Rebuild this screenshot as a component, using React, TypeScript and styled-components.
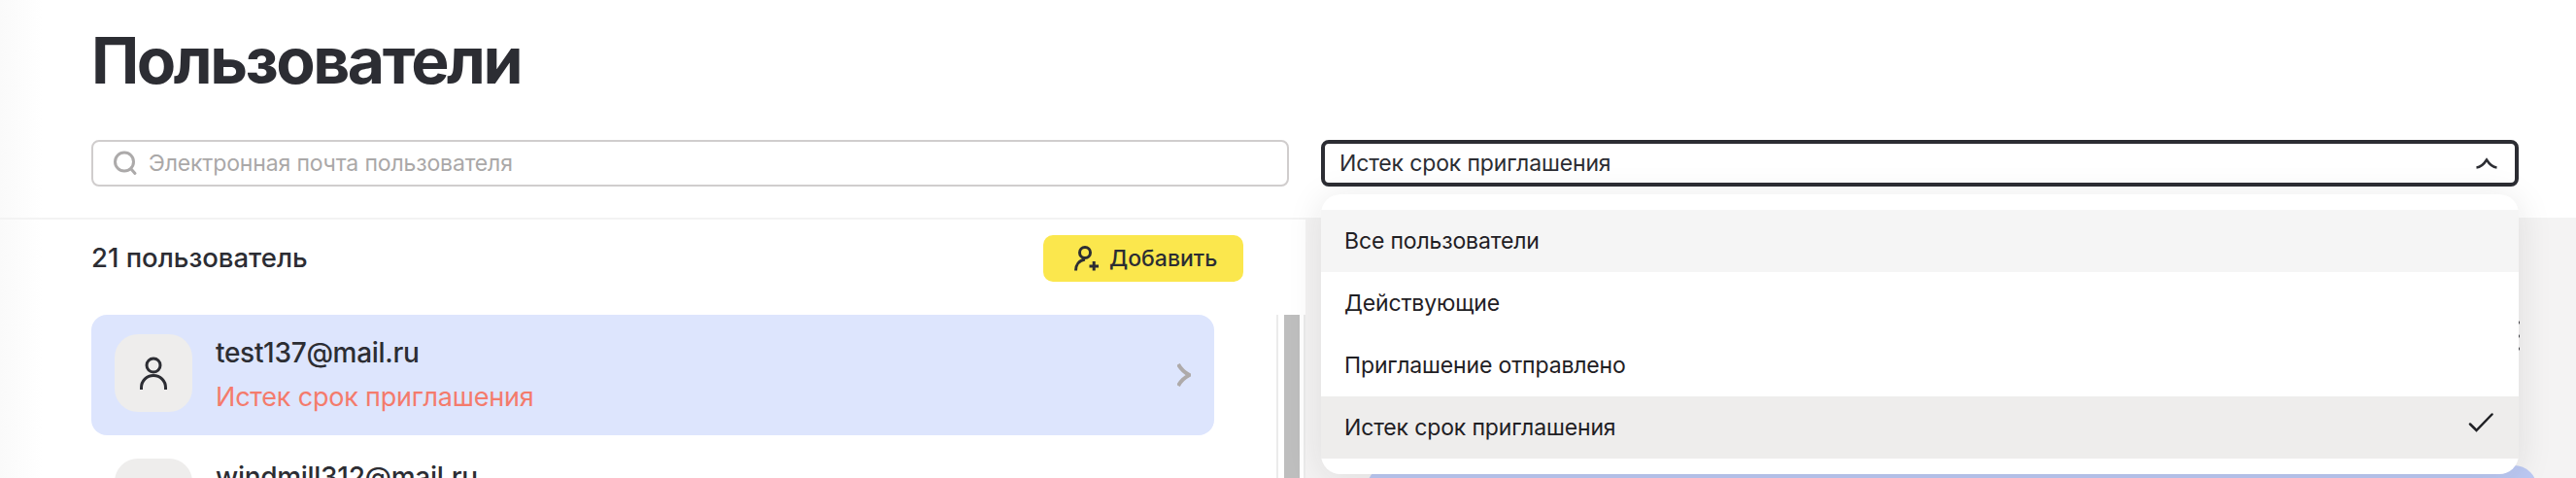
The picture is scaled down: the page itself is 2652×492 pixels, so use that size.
import React from 'react';
import styled, { createGlobalStyle } from 'styled-components';

const GlobalStyle = createGlobalStyle`
  html, body {
    margin: 0;
    padding: 0;
    background: #fff;
  }
  * {
    box-sizing: border-box;
  }
`;

// --- Styled Components ---
const Page = styled.div`
  width: 2652px;
  height: 492px;
  overflow: hidden;
  display: flex;
  flex-direction: column;
  background: linear-gradient(90deg, #fafafa 0, #fff 44px);
  font-family: Inter, 'Noto Sans', sans-serif;
  color: #2c2d33;
`;

const Header = styled.header`
  position: relative;
  z-index: 2;
  flex: none;
  height: 226px;
  padding: 29px 59px 0 94px;
  border-bottom: 2px solid #f3f3f3;
`;

const Title = styled.h1`
  margin: 0 0 49px;
  font-size: 66px;
  line-height: 66px;
  font-weight: 700;
  letter-spacing: -2.5px;
`;

const Filters = styled.div`
  display: grid;
  grid-template-columns: 1233px 1233px;
  gap: 33px;
`;

const SearchBox = styled.label`
  height: 48px;
  display: flex;
  align-items: center;
  gap: 11px;
  padding: 0 20px;
  border: 2px solid #d0cdcd;
  border-radius: 8px;
  background: #fff;
`;

const SearchInput = styled.input`
  flex: 1;
  border: 0;
  outline: 0;
  padding: 0;
  background: transparent;
  font: 400 23px/32px Inter, 'Noto Sans', sans-serif;
  letter-spacing: -0.15px;
  color: #2c2d33;
  &::placeholder {
    color: #aaa8a8;
    opacity: 1;
  }
`;

const SelectWrap = styled.div`
  position: relative;
`;

const SelectTrigger = styled.button`
  width: 100%;
  height: 48px;
  display: flex;
  align-items: center;
  justify-content: space-between;
  padding: 0 18px 0 15px;
  border: 4px solid #2c2d33;
  border-radius: 8px;
  background: #fff;
  font: 400 23px/32px Inter, 'Noto Sans', sans-serif;
  letter-spacing: -0.15px;
  color: #2c2d33;
`;

const Dropdown = styled.ul`
  position: absolute;
  top: 56px;
  left: 0;
  right: 0;
  margin: 0;
  padding: 16px 0;
  list-style: none;
  background: #fff;
  border-radius: 20px;
  box-shadow: 0 4px 36px rgba(30, 30, 30, 0.1);
`;

const Option = styled.li<{ $tone?: 'hover' | 'selected' }>`
  height: 64px;
  display: flex;
  align-items: center;
  justify-content: space-between;
  padding: 0 26px 0 24px;
  font-size: 23px;
  letter-spacing: -0.15px;
  color: #1f2024;
  background: ${p =>
    p.$tone === 'hover' ? '#f5f5f5' : p.$tone === 'selected' ? '#eeedec' : '#fff'};
`;

const CheckMark = styled.svg`
  margin-bottom: 10px;
`;

const Body = styled.main`
  flex: 1;
  min-height: 0;
  display: flex;
`;

const LeftColumn = styled.section`
  flex: none;
  width: 1344px;
  padding: 16px 0 0 94px;
  display: flex;
  flex-direction: column;
`;

const ListHeader = styled.div`
  flex: none;
  height: 48px;
  margin: 0 64px 34px 0;
  display: flex;
  align-items: center;
  justify-content: space-between;
`;

const Count = styled.h2`
  margin: -2px 0 0;
  font-size: 27.5px;
  line-height: 32px;
  font-weight: 500;
`;

const AddButton = styled.button`
  width: 206px;
  height: 48px;
  display: flex;
  align-items: center;
  gap: 10px;
  padding: 0 0 0 32px;
  border: 0;
  border-radius: 10px;
  background: #fbe74d;
  font: 500 23px/32px Inter, 'Noto Sans', sans-serif;
  color: #2c2d33;
`;

const ListArea = styled.div`
  flex: 1;
  min-height: 0;
  display: flex;
  overflow: hidden;
`;

const Rows = styled.div`
  flex: none;
  width: 1156px;
  margin-right: 64px;
  display: flex;
  flex-direction: column;
  gap: 4px;
`;

const Row = styled.article<{ $active?: boolean }>`
  flex: none;
  height: 124px;
  padding: 20px 24px;
  display: flex;
  align-items: flex-start;
  gap: 24px;
  border-radius: 16px;
  background: ${p => (p.$active ? '#dde5fd' : 'transparent')};
`;

const Avatar = styled.div`
  flex: none;
  width: 80px;
  height: 80px;
  display: flex;
  align-items: center;
  justify-content: center;
  border-radius: 24px;
  background: #eeedec;
`;

const RowText = styled.div`
  flex: 1;
`;

const Email = styled.div`
  font-size: 28px;
  line-height: 38px;
  font-weight: 500;
  letter-spacing: -0.3px;
`;

const Status = styled.div`
  margin-top: 8px;
  font-size: 27px;
  line-height: 38px;
  letter-spacing: -0.2px;
  color: #f47b6c;
`;

const RowArrow = styled.svg`
  flex: none;
  align-self: center;
`;

const ScrollTrack = styled.div`
  flex: none;
  width: 30px;
  padding: 0 4px 0 6px;
  border-left: 2px solid #ebebeb;
  border-right: 2px solid #ebebeb;
`;

const ScrollThumb = styled.div`
  height: 100%;
  background: #bebebe;
`;

const RightPanel = styled.aside`
  flex: 1;
  padding: 0 40px 0 63px;
  background: #f4f3f3;
  display: flex;
  flex-direction: column;
`;

const PanelTop = styled.div`
  flex: none;
  height: 253px;
  padding: 104px 18px 0 0;
  display: flex;
  flex-direction: column;
  align-items: flex-end;
  gap: 9.5px;
`;

const Dot = styled.span`
  width: 4px;
  height: 4px;
  border-radius: 50%;
  background: #2c2d33;
`;

const PanelCard = styled.div`
  flex: none;
  height: 120px;
  border-radius: 24px;
  background: #bcc9f3;
`;

const icon = {
  fill: 'none',
  stroke: 'currentColor',
  strokeLinecap: 'round',
} as const;

const users = [
  { email: 'test137@mail.ru', status: 'Истек срок приглашения', active: true },
  { email: 'windmill312@mail.ru' },
];

const UserIcon = () => (
  <svg width="40" height="40" viewBox="0 0 40 40" {...icon} strokeWidth={3}>
    <circle cx="20" cy="12" r="7" />
    <path d="M7.5 37v-2c0-7 5.5-12.5 12.5-12.5S32.500 28 32.500 35v2" strokeLinecap="butt" />
  </svg>
);

export default function App() {
  return (
    <Page>
      <GlobalStyle />
      <Header>
        <Title>Пользователи</Title>
        <Filters>
          <SearchBox>
            <svg width="26" height="26" viewBox="0 0 26 26" color="#acaaaa" {...icon} strokeWidth={3}>
              <circle cx="12" cy="11.500" r="9.500" />
              <path d="M19 19l4 4.500" />
            </svg>
            <SearchInput placeholder="Электронная почта пользователя" />
          </SearchBox>
          <SelectWrap>
            <SelectTrigger type="button">
              Истек срок приглашения
              <svg width="22" height="12" viewBox="0 0 22 12" {...icon} strokeWidth={2.5}>
                <path d="M0.500 10.500C5 10 8.500 6.500 11 2.500C13.500 6.500 17 10 21.500 10.500" strokeLinecap="butt" />
              </svg>
            </SelectTrigger>
            <Dropdown>
              <Option $tone="hover">Все пользователи</Option>
              <Option>Действующие</Option>
              <Option>Приглашение отправлено</Option>
              <Option $tone="selected">
                Истек срок приглашения
                <CheckMark width="26" height="20" viewBox="0 0 26 20" {...icon} strokeWidth={2.5}>
                  <path d="M2 11.500L8.500 18L24.500 1.500" />
                </CheckMark>
              </Option>
            </Dropdown>
          </SelectWrap>
        </Filters>
      </Header>
      <Body>
        <LeftColumn>
          <ListHeader>
            <Count>21 пользователь</Count>
            <AddButton type="button">
              <svg width="26" height="26" viewBox="0 0 26 26" {...icon} strokeWidth={3}>
                <circle cx="11" cy="7" r="5.500" />
                <path d="M1.500 25.500C1.500 19.500 5 15 11 14" strokeLinecap="butt" />
                <path d="M15.500 21h9.500M20.200 16v9.500" strokeLinecap="butt" />
              </svg>
              Добавить
            </AddButton>
          </ListHeader>
          <ListArea>
            <Rows>
              {users.map(u => (
                <Row key={u.email} $active={u.active}>
                  <Avatar>
                    <UserIcon />
                  </Avatar>
                  <RowText>
                    <Email>{u.email}</Email>
                    {u.status && <Status>{u.status}</Status>}
                  </RowText>
                  {u.active && (
                    <RowArrow width="14" height="24" viewBox="0 0 14 24" color="#aeaaaa" {...icon} strokeWidth={4}>
                      <path d="M1 1C3.500 5.500 7.500 9.500 12.500 12C7.500 14.500 3.500 18.500 1 23" strokeLinecap="butt" />
                    </RowArrow>
                  )}
                </Row>
              ))}
            </Rows>
            <ScrollTrack>
              <ScrollThumb />
            </ScrollTrack>
          </ListArea>
        </LeftColumn>
        <RightPanel>
          <PanelTop>
            <Dot />
            <Dot />
            <Dot />
          </PanelTop>
          <PanelCard />
        </RightPanel>
      </Body>
    </Page>
  );
}
